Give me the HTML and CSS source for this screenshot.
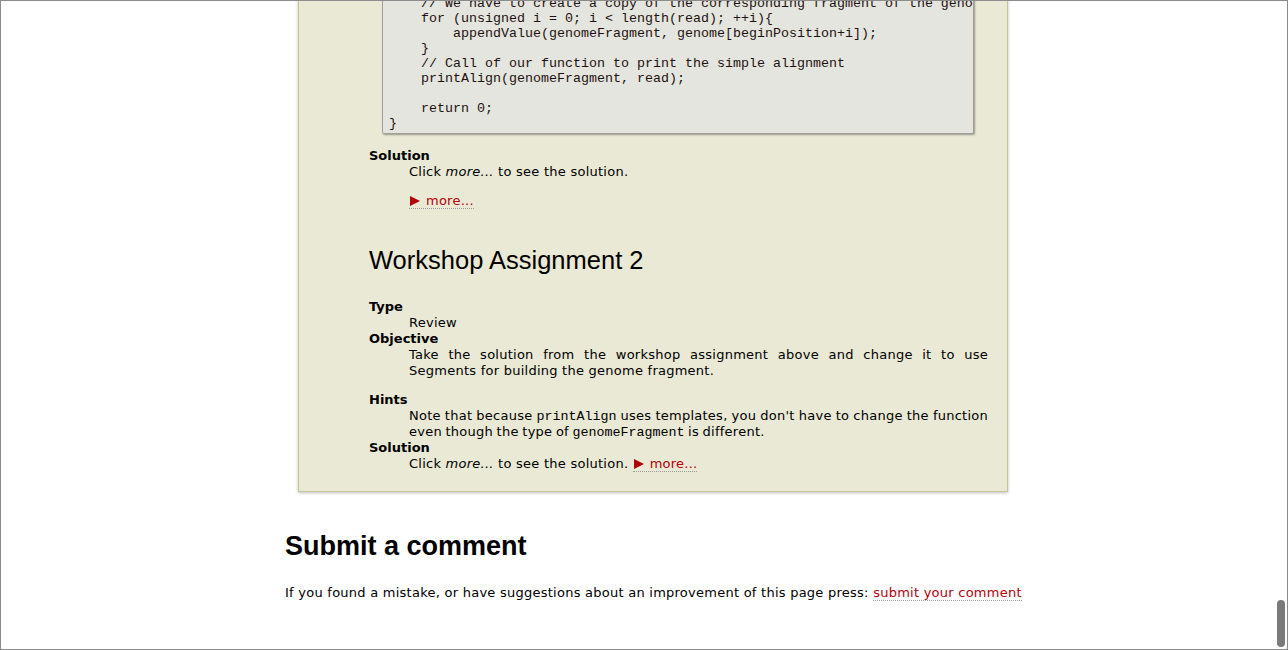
FILE: index.html
```html
<!DOCTYPE html>
<html>
<head>
<meta charset="utf-8">
<title>Workshop</title>
<link rel="stylesheet" href="styles.css">
</head>
<body>
<div class="frame"></div>
<div class="scroll-thumb"></div>
<div class="page">
  <div class="assignment">
    <div class="code-box">
<pre class="code">    // We have to create a copy of the corresponding fragment of the genome, where the read aligns to
    for (unsigned i = 0; i &lt; length(read); ++i){
        appendValue(genomeFragment, genome[beginPosition+i]);
    }
    // Call of our function to print the simple alignment
    printAlign(genomeFragment, read);

    return 0;
}</pre>
    </div>
    <dl class="props">
      <dt>Solution</dt>
      <dd>
        <p class="para">Click <em>more...</em> to see the solution.</p>
        <a class="more" href="#"><svg class="tri" width="10" height="10" viewBox="0 0 10 10"><path d="M0 0 L10 5 L0 10 Z" fill="#b00000"/></svg>more...</a>
      </dd>
    </dl>

    <h2 class="assign-title">Workshop Assignment 2</h2>

    <dl class="props props-second">
      <dt>Type</dt>
      <dd>Review</dd>
      <dt>Objective</dt>
      <dd><p class="para justify">Take the solution from the workshop assignment above and change it to use Segments for building the genome fragment.</p></dd>
      <dt>Hints</dt>
      <dd class="justify tight">Note that because <code class="ic">printAlign</code> uses templates, you don't have to change the function even though the type of <code class="ic">genomeFragment</code> is different.</dd>
      <dt>Solution</dt>
      <dd>Click <em>more...</em> to see the solution. <a class="more" href="#"><svg class="tri" width="10" height="10" viewBox="0 0 10 10"><path d="M0 0 L10 5 L0 10 Z" fill="#b00000"/></svg>more...</a></dd>
    </dl>
  </div>

  <h2 class="comment-title">Submit a comment</h2>
  <p class="comment-text">If you found a mistake, or have suggestions about an improvement of this page press: <a class="link" href="#">submit your comment</a></p>
</div>
</body>
</html>
```
FILE: styles.css
```css
html, body {
  margin: 0;
  padding: 0;
  background: #ffffff;
}
body {
  font-family: "DejaVu Sans", Verdana, sans-serif;
  font-size: 13px;
  line-height: 16px;
  letter-spacing: 0.25px;
  color: #000;
  overflow: hidden;
  height: 650px;
}
.frame {
  position: fixed;
  inset: 0;
  border: 1px solid #8c8c8c;
  pointer-events: none;
  z-index: 5;
}
.scroll-thumb {
  position: fixed;
  left: 1277px;
  top: 600px;
  width: 8px;
  height: 47px;
  border-radius: 4px;
  background: #7b7b7b;
  z-index: 6;
}
.page {
  padding-left: 285px;
  width: 780px;
}
.assignment {
  box-sizing: border-box;
  width: 710px;
  margin: -31px 0 0 13px;
  padding: 19px 19px 19px 70px;
  background: #e9e9d5;
  border: 1px solid #c5c59a;
  box-shadow: 0 1px 3px rgba(0,0,0,0.25);
}
.code-box {
  margin: 0 14px 0 13px;
  background: #e5e5df;
  border: 1px solid #a0a09a;
  border-radius: 2px;
  box-shadow: 1px 1px 2px rgba(0,0,0,0.35);
  overflow: hidden;
}
.code {
  margin: 0;
  padding: 6px 7px 2px 6px;
  font-family: "Liberation Mono", "Courier New", monospace;
  font-size: 13.33px;
  line-height: 15px;
  letter-spacing: 0;
  color: #1e120e;
  white-space: pre;
  overflow: hidden;
}
.props {
  margin: 14px 0 0 0;
}
.props-second {
  margin-top: 25px;
}
.props dt {
  font-weight: bold;
  letter-spacing: 0;
}
.props dd {
  margin: 0 0 0 40px;
}
.para {
  margin: 0 0 13px 0;
}
.justify {
  text-align: justify;
}
.tight {
  word-spacing: -0.8px;
}
.ic {
  font-family: "Liberation Mono", "Courier New", monospace;
  font-size: 13.33px;
  line-height: 1;
  letter-spacing: 0;
  word-spacing: 0;
}
.more {
  color: #b5000b;
  text-decoration: none;
  border-bottom: 1px dotted #999;
}
.tri {
  display: inline-block;
  vertical-align: -1px;
  margin: 0 6px 0 1px;
}
.assign-title {
  margin: 37px 0 0 0;
  font-family: "Liberation Sans", Arial, sans-serif;
  font-weight: normal;
  font-size: 25.5px;
  line-height: 28px;
  letter-spacing: 0;
}
.comment-title {
  margin: 38px 0 0 0;
  font-family: "Liberation Sans", Arial, sans-serif;
  font-weight: bold;
  font-size: 27px;
  line-height: 32px;
  letter-spacing: 0;
}
.comment-text {
  margin: 23px 0 0 0;
}
.link {
  color: #b5000b;
  text-decoration: none;
  border-bottom: 1px dotted #999;
}
```
